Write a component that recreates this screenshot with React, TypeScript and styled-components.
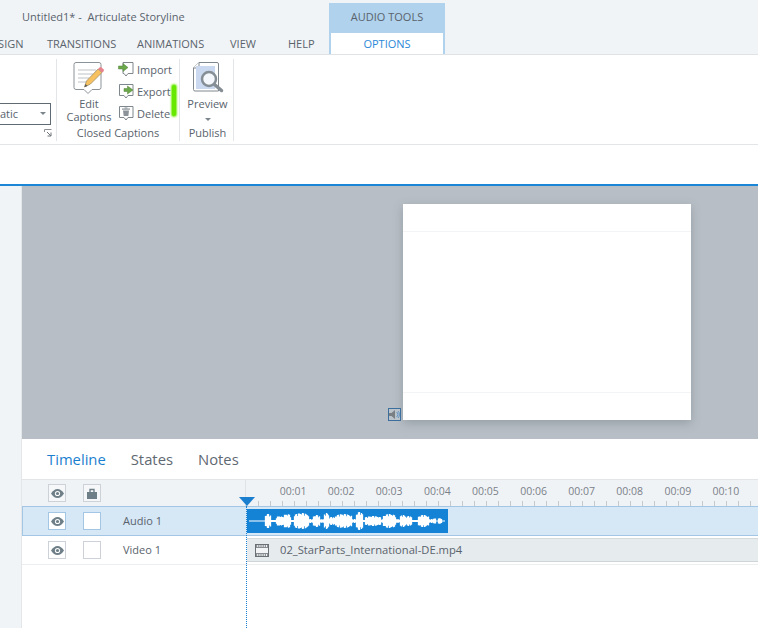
import React from "react";
import styled, { createGlobalStyle } from "styled-components";

const Global = createGlobalStyle`
  html, body { margin: 0; padding: 0; background: #f1f4f7; }
  * { box-sizing: border-box; }
`;

const Page = styled.div`
  width: 758px; height: 628px; overflow: hidden; position: relative;
  display: flex; flex-direction: column;
  background: #f1f4f7; color: #59636c;
  font-family: "Open Sans", "Noto Sans", sans-serif; font-size: 11px;
`;

/* ---- top ---- */
const TitleArea = styled.header`
  height: 55px; flex: none; display: flex; justify-content: space-between;
  border-bottom: 1px solid #dfe3e6; padding-top: 3px;
`;
const LeftTitle = styled.div`
  width: 329px; display: flex; flex-direction: column; overflow: hidden;
`;
const AppTitle = styled.div`
  padding: 7px 0 0 22px; height: 31px; white-space: pre; line-height: 14px;
`;
const Tabs = styled.nav`
  display: flex; height: 20px; line-height: 20px; margin-left: -16px;
`;
const Tab = styled.span<{ $w: number }>`
  width: ${(p) => p.$w}px; flex: none; white-space: nowrap;
`;
const Contextual = styled.div`
  width: 116px; margin-right: 313px; background: #b0d2ec; display: flex; flex-direction: column;
  align-items: center; padding: 0 2px;
`;
const CtxTitle = styled.div`
  height: 30px; line-height: 28px;
`;
const CtxTab = styled.div`
  height: 21px; width: 112px; background: #fff; color: #2b88d8; text-align: center; line-height: 21px;
`;

const Ribbon = styled.section`
  height: 90px; flex: none; background: #fff; border-bottom: 1px solid #e3e6e8;
  display: flex; padding: 4px 0 3px;
`;
const RibbonGroup = styled.div<{ $w: number; $inset?: number }>`
  width: ${(p) => p.$w}px; flex: none; border-right: 1px solid #e3e6e8; position: relative;
  padding-left: ${(p) => p.$inset ?? 0}px;
  display: flex; flex-direction: column; align-items: center;
`;
const GroupBody = styled.div`
  flex: 1; display: flex; width: 100%;
`;
const GroupLabel = styled.div`
  height: 15px; line-height: 14px; text-align: center; white-space: nowrap;
`;
const Combo = styled.div`
  width: 51px; height: 22px; margin-top: 44px; border: 1px solid #5f6a72; border-left: none;
  display: flex; justify-content: space-between; align-items: center; padding: 0 4px 2px 0;
`;
const Caret = styled.span`
  flex: none; width: 0; height: 0; border-left: 3px solid transparent; border-right: 3px solid transparent; border-top: 3px solid #7d858c;
`;
const BigButton = styled.div<{ $w: number }>`
  width: ${(p) => p.$w}px; flex: none; display: flex; flex-direction: column; align-items: center;
  text-align: center; line-height: 13px;
`;
const EditSvg = styled.svg`
  margin: 3px 0 3px -1px;
`;
const PreviewSvg = styled.svg`
  margin: 3px 0 3px;
`;
const MenuCaret = styled(Caret)`
  margin-top: 8px;
`;
const SmallCol = styled.div`
  display: flex; flex-direction: column; gap: 2px; margin-left: -3px;
`;
const SmallBtn = styled.div`
  height: 20px; display: flex; align-items: center; gap: 3px;
`;
const Launcher = styled.svg`
  position: absolute; right: 4px; bottom: 4px;
`;
const GreenMark = styled.div`
  position: absolute; left: 172px; top: 85px; width: 4px; height: 31px; border-radius: 2px;
  background: #66e800; box-shadow: 0 0 2px 1px #7eec22;
`;

const Strip = styled.div`
  height: 41px; flex: none; background: #fff; border-bottom: 2px solid #1b86d6;
`;

/* ---- main ---- */
const Main = styled.main`
  flex: 1; display: flex; min-height: 0;
`;
const Side = styled.aside`
  width: 22px; flex: none; border-right: 1px solid #e4e7e9;
`;
const Work = styled.div`
  flex: 1; display: flex; flex-direction: column; min-width: 0;
`;
const Canvas = styled.div`
  height: 253px; flex: none; background: #b7bec5; padding: 18px 0 0 381px;
`;
const Slide = styled.div`
  width: 288px; height: 216px; background: #fff; box-shadow: 0 3px 9px rgba(90,100,110,0.35);
  display: flex; flex-direction: column; justify-content: space-between; padding: 27px 0 27px; position: relative;
`;
const Guide = styled.div`
  height: 1px; background: #f3f4f5;
`;
const SoundBadge = styled.div`
  position: absolute; left: -15px; bottom: -1px; width: 13px; height: 13px; border: 1px solid #3d6f9e;
  display: flex; align-items: center; justify-content: center; background: #bcc4cb;
`;

const Panel = styled.section`
  flex: 1; background: #fff; display: flex; flex-direction: column;
`;
const PanelTabs = styled.div`
  height: 41px; flex: none; display: flex; align-items: center; padding: 0 0 0 25px; gap: 25px; font-size: 14.8px;
  border-bottom: 1px solid #e3e6e9;
`;
const PanelTab = styled.span<{ $active?: boolean }>`
  color: ${(p) => (p.$active ? "#1b7fd0" : "#5f6972")};
`;
const Grid = styled.div`
  flex: 1; display: grid; grid-template-columns: 224px 1fr; grid-template-rows: 26px 30px 29px 1fr; position: relative;
`;
const HeadCell = styled.div`
  background: #f0f3f6; display: flex; align-items: center; padding-left: 26px; gap: 17px; border-right: 1px solid #dfe3e6;
`;
const RulerCell = styled.div`
  background: #f0f3f6; position: relative; overflow: hidden;
`;
const RulerLabels = styled.div`
  display: flex; padding: 4px 0 0 23px; color: #7b8189; font-size: 10.5px; line-height: 14px;
`;
const RulerLabel = styled.span`
  width: 48.1px; flex: none; text-align: center;
`;
const Ticks = styled.div`
  position: absolute; left: 0; right: 0; bottom: 0; height: 5px;
  background: repeating-linear-gradient(to right, #c3cad0 0 1px, transparent 1px 12px);
`;
const TrackCell = styled.div<{ $sel?: boolean }>`
  display: flex; align-items: center; padding-left: ${(p) => (p.$sel ? 25 : 26)}px; gap: 17px;
  background: ${(p) => (p.$sel ? "#d6e7f6" : "#fff")};
  border-top: ${(p) => (p.$sel ? "1px solid #a3c6e4" : "none")};
  border-bottom: ${(p) => (p.$sel ? "1px solid #a3c6e4" : "1px solid #eceef0")};
  border-left: ${(p) => (p.$sel ? "1px solid #a3c6e4" : "none")};
`;
const TrackName = styled.span`
  margin-left: 5px; padding-bottom: 2px;
`;
const Square = styled.div<{ $sel?: boolean }>`
  width: 18px; height: 18px; flex: none; border: 1px solid ${(p) => (p.$sel ? "#a3c6e4" : "#ccd2d7")};
  background: #fff; display: flex; align-items: center; justify-content: center;
`;
const HeadSquare = styled(Square)`
  background: #f5f7f9;
`;
const Lane = styled.div<{ $sel?: boolean }>`
  display: flex; align-items: center;
  background: ${(p) => (p.$sel ? "#d6e7f6" : "#fff")};
  border-top: ${(p) => (p.$sel ? "1px solid #a3c6e4" : "none")};
  border-bottom: ${(p) => (p.$sel ? "1px solid #a3c6e4" : "1px solid #eceef0")};
  padding-left: 1px;
`;
const AudioClip = styled.div`
  width: 201px; height: 24px; background: #1483d6; display: flex; align-items: center;
`;
const VideoClip = styled.div`
  flex: 1; height: 24px; background: #e6ebee; border-top: 1px solid #d5dadd; border-bottom: 1px solid #cfd4d8;
  display: flex; align-items: center; padding-left: 8px; gap: 11px; font-size: 11.2px; white-space: nowrap; color: #5a636c;
`;
const ClipName = styled.span`
  padding-bottom: 2px;
`;
const Blank = styled.div``;
const Playhead = styled.div`
  position: absolute; left: 217px; top: 17px; width: 16px; height: 9px; background: #1b7fd0;
  clip-path: polygon(0 0, 100% 0, 50% 100%);
`;
const PlayLine = styled.div`
  position: absolute; left: 224px; top: 26px; bottom: 0; border-left: 1px dotted #1b7fd0;
`;

const Eye = () => (
  <svg width="13" height="9" viewBox="0 0 13 9">
    <path d="M0 4.5C2 1.5 4 0 6.5 0S11 1.5 13 4.5C11 7.5 9 9 6.5 9S2 7.5 0 4.5Z" fill="#6f7f88" />
    <circle cx="6.5" cy="4.5" r="2.6" fill="#fff" />
    <circle cx="6.5" cy="4.5" r="1.6" fill="#6f7f88" />
  </svg>
);
const Lock = () => (
  <svg width="10" height="11" viewBox="0 0 10 11">
    <path d="M3 4V1.5h4V4" fill="none" stroke="#6f7f88" strokeWidth="1.4" />
    <rect x="0" y="4" width="10" height="7" fill="#6f7f88" />
  </svg>
);
const EditIcon = () => (
  <EditSvg width="32" height="32" viewBox="0 0 32 32">
    <path d="M3 .5h23a2 2 0 0 1 2 2v23a2 2 0 0 1-2 2H19l-4 4-4-4H3a2 2 0 0 1-2-2V2.500a2 2 0 0 1 2-2Z" fill="#fff" stroke="#8b9398" />
    <path d="M5 8h18M5 12h15M5 16h11M5 20h8" stroke="#d3d6d9" strokeWidth="1.5" />
    <path d="M11.500 25l2-6L25 7l4 3.500L17.500 22Z" fill="#f6c15e" stroke="#a3906a" strokeWidth="0.8" />
    <path d="M25 7l1.500-1.500a1.500 1.500 0 0 1 2 0l2 1.800a1.500 1.500 0 0 1 0 2L29 10.500Z" fill="#e8828c" />
    <path d="M11.500 25l1-3 2 2Z" fill="#555" />
  </EditSvg>
);
const Bubble = ({ children, x = 1.5 }: { children: React.ReactNode; x?: number }) => (
  <svg width="16" height="17" viewBox="0 0 16 17">
    <path d={`M${x} 1.500h${15 - x}v11H10l-2 2.500-2-2.500H${x}Z`} fill="#fff" stroke="#7e878d" />
    {children}
  </svg>
);
const ImportArrow = () => <path d="M0.500 5h4.500V2.500l5 4-5 4V8H0.500Z" fill="#6aa84a" stroke="#55803d" strokeWidth="0.5" />;
const ExportArrow = () => <path d="M6 5.500h3.500V3L15 7l-5.500 4V8.500H6Z" fill="#6aa84a" stroke="#55803d" strokeWidth="0.5" />;
const Trash = () => (
  <g fill="#8b9298">
    <rect x="4" y="3.500" width="8" height="1.200" />
    <path d="M5 5.500h6l-.7 5.500H5.700Z" />
    <rect x="6.500" y="2.500" width="3" height="1" />
  </g>
);
const PreviewIcon = () => (
  <PreviewSvg width="32" height="32" viewBox="0 0 32 32">
    <path d="M7 .5h18A1.500 1.500 0 0 1 26.500 2v27H3a1.500 1.500 0 0 1-1.500-1.500V6Z" fill="#fff" stroke="#80888e" />
    <path d="M7 .5v5.500H1.500" fill="#fff" stroke="#80888e" />
    <rect x="4" y="4" width="19" height="23" fill="#cbd9f0" />
    <circle cx="17" cy="17" r="7" fill="#f4f7fb" stroke="#868e95" strokeWidth="2.500" />
    <path d="M22.500 22.500l7 6" stroke="#868e95" strokeWidth="3.500" strokeLinecap="round" />
  </PreviewSvg>
);
const Speaker = () => (
  <svg width="11" height="9" viewBox="0 0 11 9">
    <path d="M0 3h2.500L6 0v9L2.500 6H0Z" fill="#7a7f84" />
    <path d="M7.500 2a3 3 0 0 1 0 5M9 1a5 5 0 0 1 0 7" fill="none" stroke="#5d93c4" />
  </svg>
);
const Film = () => (
  <svg width="14" height="13" viewBox="0 0 14 13">
    <rect x="0.5" y="0.5" width="13" height="12" fill="#f2f4f5" stroke="#6a7076" />
    <path d="M1 2h12M1 11h12" stroke="#6a7076" strokeWidth="1.500" strokeDasharray="1.200 1" />
    <path d="M1 3.500h12M1 9.500h12" stroke="#868c91" strokeWidth="1" />
  </svg>
);
const Launch = () => (
  <Launcher width="8" height="8" viewBox="0 0 8 8">
    <path d="M0.500 3V0.500H7.500" fill="none" stroke="#8a9096" />
    <path d="M3 3l4 4M7 3.500V7H3.500" fill="none" stroke="#6e757b" />
  </Launcher>
);

/* [first px, last px, half height] measured along the clip */
const blobs: [number, number, number][] = [
  [18, 23, 7], [24, 28, 1], [29, 35, 5], [36, 43, 7], [44, 46, 1], [47, 61, 8], [62, 65, 2], [66, 72, 6],
  [73, 76, 2], [77, 81, 8], [82, 87, 4], [88, 104, 7], [105, 108, 2], [109, 115, 9],
  [116, 117, 1], [118, 133, 5], [134, 135, 2], [136, 148, 7], [149, 152, 2], [153, 158, 6],
  [159, 164, 5], [165, 170, 1], [171, 181, 6], [182, 185, 2], [186, 188, 3], [191, 194, 3],
];
const spikes = [1, 0.8, 0.95, 0.7, 1, 0.88, 1];
const Wave = () => {
  const d = blobs
    .flatMap(([a, b, h]) => {
      const cols: string[] = [];
      for (let x = a; x <= b; x++) {
        const t = (x - a + 0.5) / (b - a + 1);
        const env = 0.72 + 0.28 * Math.sin(Math.PI * t);
        const half = Math.max(1, h * env * spikes[(x * 3) % 7]);
        cols.push(`M${x + 0.5} ${12 - half}v${2 * half}`);
      }
      return cols;
    })
    .join("");
  return (
    <svg width="201" height="24" viewBox="0 0 201 24">
      <path d="M2 12H198" stroke="#fff" strokeWidth="1" />
      <path d={d} stroke="#fff" strokeWidth="1.300" fill="none" />
    </svg>
  );
};

const rulers = ["00:01","00:02","00:03","00:04","00:05","00:06","00:07","00:08","00:09","00:10"];

export default function App() {
  return (
    <Page>
      <Global />
      <TitleArea>
        <LeftTitle>
          <AppTitle>{"Untitled1* -  Articulate Storyline"}</AppTitle>
          <Tabs>
            <Tab $w={63}>DESIGN</Tab>
            <Tab $w={90}>TRANSITIONS</Tab>
            <Tab $w={93}>ANIMATIONS</Tab>
            <Tab $w={58}>VIEW</Tab>
            <Tab $w={30}>HELP</Tab>
          </Tabs>
        </LeftTitle>
        <Contextual>
          <CtxTitle>AUDIO TOOLS</CtxTitle>
          <CtxTab>OPTIONS</CtxTab>
        </Contextual>
      </TitleArea>
      <Ribbon>
        <RibbonGroup $w={57}>
          <GroupBody>
            <Combo><span>atic</span><Caret /></Combo>
          </GroupBody>
          <Launch />
        </RibbonGroup>
        <RibbonGroup $w={123}>
          <GroupBody>
            <BigButton $w={64}>
              <EditIcon />
              <span>Edit<br />Captions</span>
            </BigButton>
            <SmallCol>
              <SmallBtn><Bubble x={5}><ImportArrow /></Bubble>Import</SmallBtn>
              <SmallBtn><Bubble><ExportArrow /></Bubble>Export</SmallBtn>
              <SmallBtn><Bubble><Trash /></Bubble>Delete</SmallBtn>
            </SmallCol>
          </GroupBody>
          <GroupLabel>Closed Captions</GroupLabel>
        </RibbonGroup>
        <RibbonGroup $w={54} $inset={2}>
          <GroupBody>
            <BigButton $w={51}>
              <PreviewIcon />
              <span>Preview</span>
              <MenuCaret />
            </BigButton>
          </GroupBody>
          <GroupLabel>Publish</GroupLabel>
        </RibbonGroup>
      </Ribbon>
      <Strip />
      <Main>
        <Side />
        <Work>
          <Canvas>
            <Slide>
              <Guide />
              <Guide />
              <SoundBadge><Speaker /></SoundBadge>
            </Slide>
          </Canvas>
          <Panel>
            <PanelTabs>
              <PanelTab $active>Timeline</PanelTab>
              <PanelTab>States</PanelTab>
              <PanelTab>Notes</PanelTab>
            </PanelTabs>
            <Grid>
              <HeadCell>
                <HeadSquare><Eye /></HeadSquare>
                <HeadSquare><Lock /></HeadSquare>
              </HeadCell>
              <RulerCell>
                <RulerLabels>
                  {rulers.map((r) => <RulerLabel key={r}>{r}</RulerLabel>)}
                </RulerLabels>
                <Ticks />
              </RulerCell>
              <TrackCell $sel>
                <Square $sel><Eye /></Square>
                <Square $sel />
                <TrackName>Audio 1</TrackName>
              </TrackCell>
              <Lane $sel>
                <AudioClip><Wave /></AudioClip>
              </Lane>
              <TrackCell>
                <Square><Eye /></Square>
                <Square />
                <TrackName>Video 1</TrackName>
              </TrackCell>
              <Lane>
                <VideoClip><Film /><ClipName>02_StarParts_International-DE.mp4</ClipName></VideoClip>
              </Lane>
              <Blank />
              <Blank />
              <PlayLine />
              <Playhead />
            </Grid>
          </Panel>
        </Work>
      </Main>
      <GreenMark />
    </Page>
  );
}
